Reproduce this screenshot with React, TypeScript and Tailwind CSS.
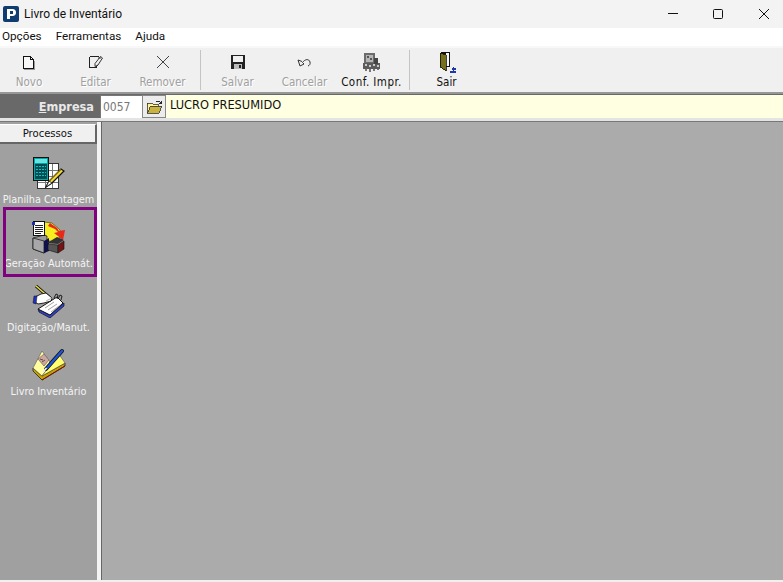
import type { ReactNode } from "react";

const tahoma = "font-['DejaVu_Sans_Condensed','Liberation_Sans',sans-serif]";
const segoe = "font-['Roboto','Liberation_Sans',sans-serif]";

const NewIcon = () => (
  <svg width="14" height="15" viewBox="0 0 14 15" fill="none" stroke="#111" shapeRendering="crispEdges">
    <path d="M1.5 1.5h7l3 3v9h-10z" fill="#f8f8f8" />
    <path d="M8.5 1.5v3h3" />
    <path d="M2 14.5h10.5V6" stroke="#999" />
  </svg>
);

const EditIcon = () => (
  <svg width="16" height="14" viewBox="0 0 16 14" fill="none" stroke="#222">
    <path d="M1.5 1.5h9M1.5 1.5v11h7M8.5 12.5l1.5-4" shapeRendering="crispEdges" />
    <path d="M7 8.5l5.5-7 2 1.5-4.5 7-3 1.5z" fill="#f0f0f0" strokeWidth="0.9" />
    <path d="M10 3h3" strokeWidth="0.8" />
  </svg>
);

const RemoveIcon = () => (
  <svg width="16" height="16" viewBox="0 0 16 16" fill="none" stroke="#444" strokeWidth="1">
    <path d="M2 2l12 12M14 2L2 14" />
  </svg>
);

const SaveIcon = () => (
  <svg width="16" height="16" viewBox="0 0 16 16" shapeRendering="crispEdges">
    <rect x="1" y="1" width="14" height="14" fill="#222" />
    <rect x="3" y="2" width="10" height="6" fill="#f0f0f0" />
    <rect x="4" y="10" width="8" height="5" fill="#bbb" />
    <rect x="9" y="11" width="2" height="3" fill="#222" />
  </svg>
);

const UndoIcon = () => (
  <svg width="16" height="12" viewBox="0 0 16 12" fill="none" stroke="#333" strokeWidth="1">
    <path d="M1 4l2 6 4-2-1.5-1.5C8 3 12 2.5 13 6c.5 2-.5 3.5-2 4M1 4l4 1.5" />
  </svg>
);

const PrinterIcon = () => (
  <svg width="18" height="19" viewBox="0 0 18 19" shapeRendering="crispEdges">
    <rect x="1" y="0" width="11" height="11" fill="#6b6b6b" />
    <rect x="3" y="2" width="7" height="7" fill="#b5b5b5" />
    <path d="M4 3h2v2H4zM7 5h2v2H7z" fill="#555" />
    <rect x="0" y="10" width="17" height="6" fill="#5c5c5c" />
    <rect x="11" y="5" width="4" height="6" fill="#444" />
    <path d="M2 11h2v2H2zM6 12h2v2H6zM10 11h2v2h-2zM14 12h2v2h-2z" fill="#c8c8c8" />
    <path d="M2 16h2v2H2zM6 16h2v3H6zM10 16h2v2h-2zM14 16h2v1h-2z" fill="#777" />
  </svg>
);

const ExitIcon = () => (
  <svg width="20" height="23" viewBox="0 0 20 23" shapeRendering="crispEdges">
    <rect x="4" y="1" width="9" height="15" fill="#111" />
    <rect x="9" y="2" width="3" height="13" fill="#f8f8f8" />
    <path d="M3 2l6 2v16l-6-4z" fill="#76701c" stroke="#111" strokeWidth="0.8" />
    <path d="M13 21h6M15 18h4M16.5 16v5" stroke="#1f35a8" strokeWidth="1.3" fill="none" />
  </svg>
);

const FolderIcon = () => (
  <svg width="17" height="14" viewBox="0 0 17 14" shapeRendering="crispEdges">
    <path d="M1 3h5l1 1h5v2H5L2 13H1z" fill="#fff29a" stroke="#333" strokeWidth="0.8" />
    <path d="M4.5 6H16l-3 7H1.5z" fill="#c9b23d" stroke="#333" strokeWidth="0.8" />
    <path d="M10 2c2-1.5 3.5-1 4.5 1M15 1v2.500h-2.500" fill="none" stroke="#111" strokeWidth="0.9" />
  </svg>
);

const CalcIcon = () => (
  <svg width="34" height="34" viewBox="0 0 34 34">
    <g shapeRendering="crispEdges">
      <rect x="5.500" y="7.500" width="21" height="25" fill="#fff" stroke="#333" />
      <path d="M6 14.500h20M6 20.500h20M6 26.500h20M13.500 8v24M20.500 8v24" stroke="#777" fill="none" />
      <rect x="1.500" y="1.500" width="15" height="23" fill="#00a8a8" stroke="#111" />
      <rect x="3" y="3" width="12" height="4" fill="#70e0e0" />
      <rect x="3" y="8" width="12" height="15" fill="#004a50" />
      <path d="M4 10h10M4 13h10M4 16h10M4 19h10" stroke="#00c8c8" strokeDasharray="2 1" fill="none" />
    </g>
    <path d="M14 31l3-6 12-12 3 2-12 12z" fill="#f0d830" stroke="#111" strokeWidth="1.2" />
    <path d="M14 31l3-6 3 2z" fill="#fff" stroke="#111" strokeWidth="0.8" />
    <path d="M17 25l12-12" stroke="#a08000" strokeWidth="0.8" />
  </svg>
);

const AutoIcon = () => (
  <svg width="34" height="34" viewBox="0 0 34 34">
    <path d="M12 2l8 1 8 7 1 6-7 6-9-2z" fill="#f5ee20" stroke="#333" strokeWidth="0.6" />
    <path d="M18 3l7 5 2 3 6-1-2 10-9-7 4-1-3-3-7-3z" fill="#e82818" />
    <path d="M1 18l11-3 3 1v15l-3 2-11-4z" fill="#9a9a9a" stroke="#111" strokeWidth="0.7" />
    <path d="M1 18l11 3v12L1 29z" fill="#a8a8a8" stroke="#111" strokeWidth="0.7" />
    <path d="M12 21l5-3v13l-5 2z" fill="#10104c" />
    <path d="M15 23l10-6 7 3-6 4z" fill="#333" />
    <path d="M16 24l10 1v8l-10-3z" fill="#555" stroke="#111" strokeWidth="0.6" />
    <path d="M26 25l6-4v8l-6 4z" fill="#741414" stroke="#111" strokeWidth="0.6" />
    <g shapeRendering="crispEdges">
      <rect x="1.500" y="1.500" width="11" height="14" fill="#fff" stroke="#111" />
      <path d="M3 5h8M3 7h8M3 9h8M3 11h8M3 13h6" stroke="#222" fill="none" />
      <rect x="0" y="2" width="3" height="3" fill="#1a2fb0" />
    </g>
  </svg>
);

const TypingIcon = () => (
  <svg width="34" height="34" viewBox="0 0 34 34">
    <path d="M6 25l1 3 11 6 14-12v-3L18 31z" fill="#3040d0" stroke="#111" strokeWidth="0.7" />
    <path d="M6 25L25 13l6 6-13 12z" fill="#fff" stroke="#111" />
    <path d="M13 24l9-6M16 26l9-6M19 28l8-6" stroke="#999" strokeWidth="0.9" />
    <path d="M22 14l2-4 2 1-1 4M26 15l2-4 2 1-1 4" fill="none" stroke="#111" strokeWidth="0.9" />
    <path d="M4 2l14 12" stroke="#111" strokeWidth="3" />
    <path d="M4 2l14 12" stroke="#f0e040" strokeWidth="1.5" />
    <path d="M3 13l6-3 5-1 6 5-1 3-7 2-6 1-3-2z" fill="#fff" stroke="#111" strokeWidth="0.9" />
    <path d="M14 17l6-3" stroke="#999" strokeWidth="0.8" />
    <path d="M2 12l3 0-1 8-3-1z" fill="#1f2fc0" stroke="#111" strokeWidth="0.5" />
  </svg>
);

const BookIcon = () => (
  <svg width="34" height="34" viewBox="0 0 34 34">
    <path d="M1 23l9 9 23-14v-3L10 28 1 20z" fill="#c8a000" stroke="#222" strokeWidth="0.8" />
    <path d="M10 32l23-14" stroke="#7a1010" strokeWidth="1" />
    <path d="M1 20L10 3l8 11-2 6-6 8z" fill="#ffffa0" stroke="#555" strokeWidth="0.6" />
    <path d="M16 20l2-6 8-9 7 10-23 13z" fill="#ffff70" stroke="#555" strokeWidth="0.6" />
    <path d="M6 11l6-5 5 6-5 6z" fill="#c8a8a0" stroke="#806060" strokeWidth="0.7" />
    <path d="M8 11l3 1M10 14l3-2" stroke="#704848" strokeWidth="1" />
    <path d="M14 21L30 3" stroke="#111" strokeWidth="4" strokeLinecap="round" />
    <path d="M15 20L30 3" stroke="#1f55d8" strokeWidth="2.400" strokeLinecap="round" />
    <path d="M11 24l3.500-4" stroke="#eee" strokeWidth="1.800" />
  </svg>
);

const Tool = ({ icon, label, w, off, wide }: { icon: ReactNode; label: string; w: string; off?: boolean; wide?: boolean }) => (
  <div className={`${w} h-[40px] flex flex-col items-center`}>
    <div className="h-[24px] flex items-center justify-center">{icon}</div>
    <span
      className={`${tahoma} mt-[1px] text-[11.5px] leading-[14px] whitespace-nowrap ${wide ? "tracking-[0.45px]" : ""} ${
        off ? "text-[#a0a0a0] [text-shadow:1px_1px_0_#fff]" : "text-[#111]"
      }`}
    >
      {label}
    </span>
  </div>
);

const Proc = ({ icon, label, boxed }: { icon: ReactNode; label: string; boxed?: boolean }) => (
  <div className="relative h-[64px] flex flex-col items-center pt-[12px]">
    {boxed && <div className="absolute left-[3px] top-[-1px] w-[94px] h-[70px] border-[3px] border-[#800080]" />}
    <div className="h-[34px] ml-[1px]">{icon}</div>
    <span className={`${tahoma} mt-[3px] text-[10.8px] leading-[14px] text-[#f4f4f4] whitespace-nowrap`}>{label}</span>
  </div>
);

const Sep = () => <div className="w-px h-[40px] bg-[#c4c4c4] ml-[4px] mr-[3px]" />;

export default function App() {
  return (
    <div className={`${segoe} w-[783px] h-[582px] overflow-hidden flex flex-col bg-[#f0f0f0] text-[#111]`}>
      {/* title bar */}
      <div className="h-[28px] bg-[#f3f3f3] flex items-center shrink-0">
        <svg className="ml-[3px]" width="16" height="16" viewBox="0 0 16 16">
          <rect width="16" height="16" rx="2" fill="#0f3d70" />
          <path d="M4 13V3h5.500a3 3 0 0 1 0 7H7v3z" fill="#fff" />
          <rect x="7" y="5" width="3" height="3" fill="#0f3d70" />
        </svg>
        <span className="ml-[5px] text-[12px]">Livro de Inventário</span>
        <div className="ml-auto mr-[14px] flex items-center gap-[35px] text-[#111]">
          <svg width="10" height="10" viewBox="0 0 10 10" stroke="currentColor" shapeRendering="crispEdges">
            <path d="M0 4.500h10" />
          </svg>
          <svg width="10" height="10" viewBox="0 0 10 10" fill="none" stroke="currentColor">
            <rect x="0.500" y="0.500" width="9" height="9" rx="1" />
          </svg>
          <svg width="10" height="10" viewBox="0 0 10 10" fill="none" stroke="currentColor" className="ml-[1px]">
            <path d="M0 0l10 10M10 0L0 10" />
          </svg>
        </div>
      </div>

      {/* menu */}
      <div className="h-[18px] bg-white flex items-center gap-[14px] pl-[2px] text-[11.7px] shrink-0">
        <span>Opções</span>
        <span>Ferramentas</span>
        <span>Ajuda</span>
      </div>

      {/* toolbar */}
      <div className="h-[46px] shrink-0 border-t-[2px] border-[#f8f8f8] bg-[#f0f0f0] flex items-start pt-[2px]">
        <Tool w="w-[58px]" off label="Novo" icon={<NewIcon />} />
        <Tool w="w-[67px] ml-[4px]" off label="Editar" icon={<EditIcon />} />
        <Tool w="w-[67px]" off label="Remover" icon={<RemoveIcon />} />
        <Sep />
        <Tool w="w-[67px]" off label="Salvar" icon={<SaveIcon />} />
        <Tool w="w-[67px]" off label="Cancelar" icon={<UndoIcon />} />
        <Tool w="w-[67px]" wide label="Conf. Impr." icon={<PrinterIcon />} />
        <Sep />
        <Tool w="w-[67px]" label="Sair" icon={<ExitIcon />} />
      </div>

      {/* empresa */}
      <div className="h-[29px] shrink-0 flex flex-col">
        <div className="h-[2px] bg-[#979797]" />
        <div className="h-[1px] bg-[#696969]" />
        <div className="h-[23px] flex">
          <div className={`${tahoma} w-[100px] bg-[#696969] text-[#e8e8e8] text-right pr-[6px] font-bold text-[12.6px] leading-[23px]`}>
            <span className="underline">E</span>mpresa
          </div>
          <div className={`${tahoma} w-[42px] bg-white border-l border-t border-[#777] text-[#777] text-[12px] leading-[22px] pl-[2px]`}>
            0057
          </div>
          <div className="w-[24px] bg-[#ececec] border border-[#888] flex items-center justify-center">
            <FolderIcon />
          </div>
          <div className={`${tahoma} flex-1 bg-[#ffffe1] text-[12.7px] leading-[20px] pl-[4px]`}>LUCRO PRESUMIDO</div>
        </div>
        <div className="h-[3px] bg-[#e4e4e4]" />
      </div>

      {/* body */}
      <div className="flex-1 flex border-t border-[#777] min-h-0">
        <div className="w-[97px] bg-[#a0a0a0] pt-[2px] shrink-0">
          <div className={`${tahoma} w-[97px] h-[20px] bg-[#f0f0f0] border-b-[2px] border-r-[2px] border-[#666] border-t border-t-white text-center text-[11.2px] leading-[18px]`}>
            Processos
          </div>
          <Proc label="Planilha Contagem" icon={<CalcIcon />} />
          <Proc boxed label="Geração Automát." icon={<AutoIcon />} />
          <Proc label="Digitação/Manut." icon={<TypingIcon />} />
          <Proc label="Livro Inventário" icon={<BookIcon />} />
        </div>
        <div className="w-[4px] bg-[#f4f4f4] shrink-0" />
        <div className="w-[1px] bg-[#666] shrink-0" />
        <div className="flex-1 bg-[#ababab]" />
      </div>
      <div className="h-[2px] bg-[#f0f0f0] shrink-0" />
    </div>
  );
}
